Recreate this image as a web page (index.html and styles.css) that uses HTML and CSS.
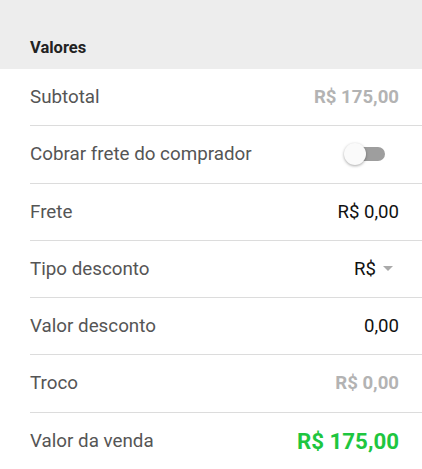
FILE: index.html
```html
<!DOCTYPE html>
<html lang="pt-BR">
<head>
    <meta charset="UTF-8">
    <meta name="viewport" content="width=device-width, initial-scale=1.0">
    <title>Valores</title>
    <link rel="stylesheet" href="styles.css">
</head>

<body>
    <div class="section-header">Valores</div>

    <div class="list">
        <div class="row">
            <span class="label">Subtotal</span>
            <span class="value muted bold">R$ 175,00</span>
        </div>
        <div class="row">
            <span class="label">Cobrar frete do comprador</span>
            <span class="switch"><span class="knob"></span></span>
        </div>
        <div class="row">
            <span class="label">Frete</span>
            <span class="value">R$ 0,00</span>
        </div>
        <div class="row">
            <span class="label">Tipo desconto</span>
            <span class="select">R$ <span class="caret"></span></span>
        </div>
        <div class="row">
            <span class="label">Valor desconto</span>
            <span class="value">0,00</span>
        </div>
        <div class="row">
            <span class="label">Troco</span>
            <span class="value muted bold">R$ 0,00</span>
        </div>
        <div class="row">
            <span class="label">Valor da venda</span>
            <span class="value total">R$ 175,00</span>
        </div>
    </div>
</body>
</html>
```

FILE: styles.css
```css
body {
    margin: 0;
    font-family: Roboto, "Liberation Sans", Arial, sans-serif;
    background-color: #fff;
    color: #222;
}

.section-header {
    height: 69px;
    box-sizing: border-box;
    padding: 38px 30px 0;
    background-color: #ededed;
    font-size: 16.5px;
    font-weight: bold;
    color: #222;
}

.list {
    padding-left: 30px;
}

.row {
    height: 56.25px;
    display: flex;
    align-items: center;
    justify-content: space-between;
    padding-right: 23px;
    border-bottom: 1px solid #dcdcdc;
}

.label {
    font-size: 18.8px;
    color: #555;
}

.value {
    font-size: 18.6px;
    color: #111;
}

.muted {
    color: #b3b3b3;
}

.bold {
    font-weight: bold;
}

.total {
    font-size: 22.3px;
    font-weight: bold;
    color: #1ec63f;
}

/* switch desligado */
.switch {
    position: relative;
    width: 42px;
    height: 24px;
    margin-right: 14px;
}

.switch::before {
    content: "";
    position: absolute;
    left: 12px;
    top: 5px;
    width: 30px;
    height: 14px;
    border-radius: 7px;
    background-color: #9e9e9e;
}

.knob {
    position: absolute;
    left: 1px;
    top: 1px;
    width: 22px;
    height: 22px;
    border-radius: 50%;
    background-color: #fafafa;
    box-shadow: 0 1px 3px rgba(0, 0, 0, 0.35);
}

.select {
    display: flex;
    align-items: center;
    font-size: 18.6px;
    color: #111;
    margin-right: 6px;
}

.caret {
    width: 0;
    height: 0;
    margin-left: 7px;
    border-left: 5px solid transparent;
    border-right: 5px solid transparent;
    border-top: 5px solid #aaa;
}
```
